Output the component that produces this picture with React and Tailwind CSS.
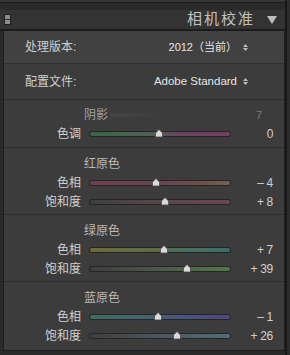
import React from "react";

const font = { fontFamily: '"Liberation Sans", "Noto Sans CJK SC", sans-serif' };

const sliders = {
  tint: { grad: "bg-[linear-gradient(90deg,#3a6444,#4e6254_45%,#64485e_60%,#7a3a68)]", value: 0, text: "0" },
  redHue: { grad: "bg-[linear-gradient(90deg,#70404f,#6a4450_50%,#6e5048_80%,#786050)]", value: -4, text: "– 4" },
  redSat: { grad: "bg-[linear-gradient(90deg,#3e3e3e,#564648_45%,#704450)]", value: 8, text: "+ 8" },
  greenHue: { grad: "bg-[linear-gradient(90deg,#6c6c3a,#5c6c44_45%,#46705c_70%,#3c6e6a)]", value: 7, text: "+ 7" },
  greenSat: { grad: "bg-[linear-gradient(90deg,#3e3e3e,#4c5648_45%,#507a44)]", value: 39, text: "+ 39" },
  blueHue: { grad: "bg-[linear-gradient(90deg,#3c6e62,#446274_45%,#4a5280_70%,#50467e)]", value: -1, text: "– 1" },
  blueSat: { grad: "bg-[linear-gradient(90deg,#3e3e3e,#4a545a_45%,#4e6e7a)]", value: 26, text: "+ 26" },
};

const Slider = ({ label, s }) => (
  <div className="flex items-center h-[19px]">
    <div className="w-[77px] text-right text-[12px] text-[#d0d0d0]">{label}</div>
    <div className="relative ml-[8px] w-[142px] h-[6px] rounded-[3px] bg-[#262626] p-[1px]">
      <div className={`h-full rounded-[2px] ${s.grad}`} />
      <div
        className="absolute top-[-2px] w-[10px] h-[9px]"
        style={{ left: `${(142 * (s.value + 100)) / 200 - 6}px` }}
      >
        <svg width="10" height="9" viewBox="0 0 10 9">
          <path d="M5 0.5 L8.5 4 L8.5 8 L1.5 8 L1.5 4 Z" fill="#dadada" stroke="#4a4a4a" strokeWidth="0.8" />
        </svg>
      </div>
    </div>
    <div className="w-[42px] text-right text-[12px] text-[#d0d0d0] tracking-tight">{s.text}</div>
  </div>
);

const Section = ({ title, rows }) => (
  <div className="border-t border-[#2e2e2e] pt-[7px] pb-[3px]">
    <div className="h-[18px] pl-[80px] text-[12px] leading-[18px] text-[#b8b8b8]">{title}</div>
    {rows.map(([label, s]) => (
      <Slider key={label} label={label} s={s} />
    ))}
  </div>
);

const UpDown = () => (
  <svg width="7" height="9" viewBox="0 0 7 9" className="ml-[5px]">
    <path d="M1 4 L3.5 1 L6 4 Z M1 5 L3.5 8 L6 5 Z" fill="#bdbdbd" />
  </svg>
);

export default function App() {
  return (
    <div className="w-[290px] h-[355px] bg-[#2a2a2a] flex overflow-hidden" style={font}>
      <div className="w-[285px] flex flex-col">
        <div className="h-[3px] bg-[#383838] border-b border-[#1c1c1c]" />
        <div className="h-[7px] bg-[#2a2a2a]" />
        <div className="h-[19px] bg-[#333333] flex items-center pl-[4px] pr-[8px]">
          <div className="w-[7px] h-[11px] bg-[#8a8a8a] border border-[#1e1e1e] flex flex-col justify-center">
            <div className="h-[1px] bg-[#333]" />
          </div>
          <div className="ml-auto text-[15px] tracking-[2px] text-[#c0c0c0]">相机校准</div>
          <svg width="10" height="8" viewBox="0 0 10 8" className="ml-[12px]">
            <path d="M0 0 L10 0 L5 8 Z" fill="#bdbdbd" />
          </svg>
        </div>
        <div className="h-[2px] bg-[#1c1c1c]" />
        <div className="flex flex-1 pl-[3px]">
          <div className="flex-1 flex flex-col border-l border-r border-b border-[#1e1e1e] bg-[#3c3c3c] mb-[4px]">
            <div className="h-[32px] bg-[#414141] flex items-center pl-[21px] pr-[35px] text-[12px] text-[#cfcfcf]">
              <span>处理版本:</span>
              <span className="ml-auto text-[11px] text-[#e4e4e4]">2012（当前）</span>
              <UpDown />
            </div>
            <div className="h-[36px] border-t border-[#2e2e2e] flex items-center pl-[21px] pr-[35px] text-[12px] text-[#cfcfcf]">
              <span>配置文件:</span>
              <span className="ml-auto text-[11.5px] text-[#e4e4e4]">Adobe Standard</span>
              <UpDown />
            </div>
            <div className="h-[48px] border-t border-[#2e2e2e] pt-[6px]">
              <div className="flex items-center h-[18px]">
                <div className="pl-[80px] text-[12px] text-[#a0a0a0]">阴影</div>
                <div className="ml-[2px] w-[60px] h-[4px] bg-[linear-gradient(90deg,#4a4a4a,transparent)] opacity-60" />
                <div className="ml-auto mr-[22px] text-[11px] text-[#7a7a7a]">7</div>
              </div>
              <Slider label="色调" s={sliders.tint} />
            </div>
            <Section title="红原色" rows={[["色相", sliders.redHue], ["饱和度", sliders.redSat]]} />
            <Section title="绿原色" rows={[["色相", sliders.greenHue], ["饱和度", sliders.greenSat]]} />
            <Section title="蓝原色" rows={[["色相", sliders.blueHue], ["饱和度", sliders.blueSat]]} />
          </div>
        </div>
      </div>
      <div className="w-[2px] bg-[#181818]" />
      <div className="flex-1 bg-[#2c2c2c]" />
    </div>
  );
}
